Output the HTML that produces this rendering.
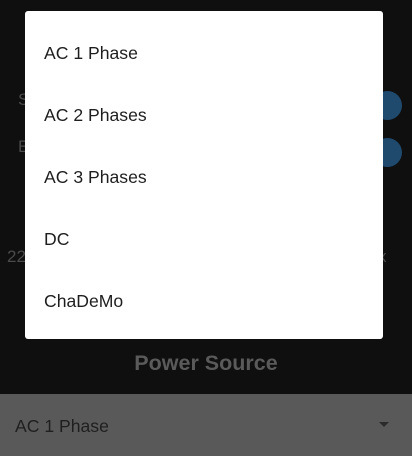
<!DOCTYPE html>
<html><head><style>
body{margin:0;width:412px;height:456px;background:#0f0f0f;position:relative;overflow:hidden;font-family:"Liberation Sans",Roboto,sans-serif}
.bg{position:absolute;color:#4a4a4a;font-size:17px}
.c{position:absolute;width:29px;height:29px;border-radius:50%;background:#1f4a6e}
.dlg{position:absolute;left:25px;top:11px;width:358px;height:328px;background:#fff;border-radius:3px}
.it{position:absolute;left:19px;font-size:17.6px;color:#1e1e1e;line-height:20px}
</style></head><body>
<div class="bg" style="left:18px;top:90px">S</div>
<div class="bg" style="left:18px;top:137px">E</div>
<div class="c" style="left:373px;top:91px"></div>
<div class="c" style="left:373px;top:138px"></div>
<div class="bg" style="left:7px;top:247px">22</div>
<div class="bg" style="left:378px;top:247px">x</div>
<div class="dlg">
<div class="it" style="top:32px">AC 1 Phase</div>
<div class="it" style="top:94px">AC 2 Phases</div>
<div class="it" style="top:156px">AC 3 Phases</div>
<div class="it" style="top:218px">DC</div>
<div class="it" style="top:280px">ChaDeMo</div>
</div>
<div style="position:absolute;left:0;width:412px;top:351px;text-align:center;font-size:21.5px;font-weight:bold;color:#5a5a5a;line-height:24px">Power Source</div>
<div style="position:absolute;left:0;top:394px;width:412px;height:62px;background:#595959">
<div style="position:absolute;left:15px;top:22px;font-size:17.6px;color:#1f1f1f;line-height:20px">AC 1 Phase</div>
<div style="position:absolute;left:379px;top:28px;width:0;height:0;border-left:5px solid transparent;border-right:5px solid transparent;border-top:5px solid #2a2a2a"></div>
</div>
</body></html>
